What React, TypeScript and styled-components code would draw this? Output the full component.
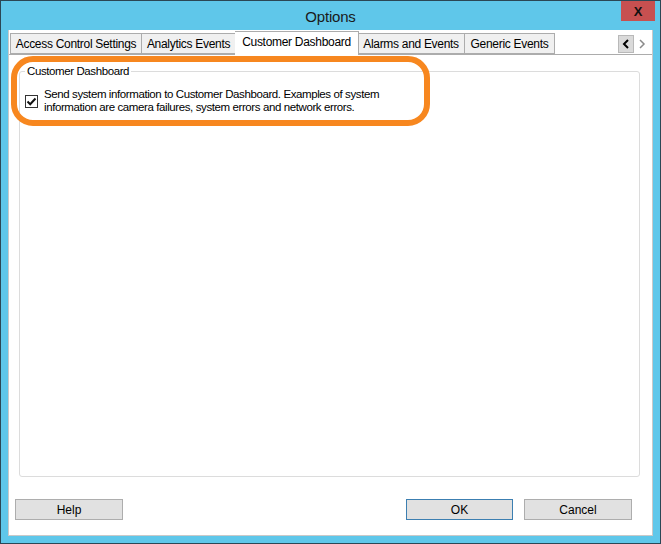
import React from "react";
import styled, { createGlobalStyle } from "styled-components";

const GlobalStyle = createGlobalStyle`
  html, body { margin: 0; padding: 0; background: #ffffff; }
  * { box-sizing: border-box; }
`;

const Window = styled.div`
  position: relative;
  width: 661px;
  height: 544px;
  background: #5fc7ea;
  border: 1px solid #2b4755;
  display: flex;
  flex-direction: column;
  font-family: "Liberation Sans", Arial, sans-serif;
  font-size: 12px;
  color: #000;
`;

const TitleBar = styled.div`
  height: 29px;
  display: grid;
  grid-template-columns: 1fr auto 1fr;
`;

const Title = styled.div`
  grid-column: 2;
  align-self: center;
  font-size: 15px;
  color: #1a1a1a;
  padding-top: 1px;
  letter-spacing: -0.2px;
`;

const CloseButton = styled.div`
  grid-column: 3;
  justify-self: end;
  align-self: start;
  margin-right: 5px;
  width: 34px;
  height: 20px;
  background: #c75050;
  display: flex;
  align-items: center;
  justify-content: center;
  font-weight: bold;
  font-size: 13px;
  color: #111;
`;

const Client = styled.div`
  flex: 1;
  margin: 0 7px 7px 7px;
  background: #ffffff;
  border-left: 1px solid #c9c9c9;
  border-right: 1px solid #c9c9c9;
  border-bottom: 1px solid #c9c9c9;
  display: flex;
  flex-direction: column;
`;

const TabStrip = styled.div`
  display: flex;
  align-items: flex-end;
  height: 24px;
  padding-left: 1px;
  padding-right: 1px;
  background: #ffffff;
`;

const Tab = styled.div<{ $active?: boolean; $w: number }>`
  width: ${(p) => p.$w}px;
  height: ${(p) => (p.$active ? 24 : 21)}px;
  margin-bottom: ${(p) => (p.$active ? -1 : 0)}px;
  position: relative;
  z-index: ${(p) => (p.$active ? 2 : 1)};
  background: ${(p) => (p.$active ? "#ffffff" : "#f0f0f0")};
  border: 1px solid #acacac;
  border-bottom: ${(p) => (p.$active ? "none" : "1px solid #acacac")};
  margin-left: ${(p) => (p.$active ? -1 : 0)}px;
  margin-right: ${(p) => (p.$active ? -1 : 0)}px;
  display: flex;
  align-items: center;
  justify-content: center;
  padding-top: ${(p) => (p.$active ? 0 : 1)}px;
  padding-bottom: ${(p) => (p.$active ? 3 : 0)}px;
  white-space: nowrap;
  font-size: 12px;
  letter-spacing: -0.3px;
  & + & { border-left: ${(p) => (p.$active ? "1px solid #acacac" : "none")}; }
`;

const Spacer = styled.div`
  flex: 1;
`;

const Scroller = styled.div`
  display: flex;
  align-self: flex-end;
  margin-bottom: 1px;
  margin-right: 1px;
`;

const ScrollBtn = styled.div<{ $pressed?: boolean }>`
  width: 16px;
  height: 18px;
  display: flex;
  align-items: center;
  justify-content: center;
  background: ${(p) => (p.$pressed ? "#dadada" : "#ffffff")};
  border: 1px solid ${(p) => (p.$pressed ? "#b9b9b9" : "#ffffff")};
`;

const TabPage = styled.div`
  flex: 1;
  border-top: 1px solid #acacac;
  padding: 10px 12px 0 10px;
  display: flex;
  flex-direction: column;
`;

const Group = styled.fieldset`
  margin: 0;
  height: 412px;
  border: 1px solid #dcdcdc;
  border-radius: 3px;
  padding: 11px 5px 0 5px;
`;

const Legend = styled.legend`
  padding: 0 2px;
  margin-left: 0;
  font-size: 11.5px;
  letter-spacing: -0.4px;
`;

const CheckRow = styled.label`
  display: flex;
  align-items: center;
  gap: 6px;
`;

const CheckBox = styled.span`
  width: 13px;
  height: 13px;
  flex: none;
  border: 1px solid #333;
  background: #fff;
  display: flex;
  align-items: center;
  justify-content: center;
`;

const CheckText = styled.span`
  line-height: 13px;
  font-size: 11.5px;
  letter-spacing: -0.4px;
`;

const ButtonRow = styled.div`
  display: flex;
  align-items: center;
  padding: 0 20px 15px 6px;
  gap: 11px;
`;

const Button = styled.div<{ $default?: boolean; $w: number }>`
  width: ${(p) => p.$w}px;
  height: 21px;
  background: #e1e1e1;
  border: 1px solid ${(p) => (p.$default ? "#3c7fb1" : "#adadad")};
  display: flex;
  align-items: center;
  justify-content: center;
  font-size: 12px;
`;

const Highlight = styled.div`
  position: absolute;
  left: 10px;
  top: 55px;
  width: 419px;
  height: 70px;
  border: 6px solid #f7871f;
  border-radius: 22px;
  pointer-events: none;
  z-index: 5;
`;

const tabs = [
  { label: "Access Control Settings", w: 132 },
  { label: "Analytics Events", w: 94 },
  { label: "Customer Dashboard", w: 124, active: true },
  { label: "Alarms and Events", w: 107 },
  { label: "Generic Events", w: 90 },
];

export default function App() {
  return (
    <>
      <GlobalStyle />
      <Window>
        <TitleBar>
          <Title>Options</Title>
          <CloseButton>X</CloseButton>
        </TitleBar>
        <Client>
          <TabStrip>
            {tabs.map((t) => (
              <Tab key={t.label} $active={t.active} $w={t.w}>
                {t.label}
              </Tab>
            ))}
            <Spacer />
            <Scroller>
              <ScrollBtn $pressed>
                <svg width="8" height="10" viewBox="0 0 8 10">
                  <path d="M6 1 L2 5 L6 9" fill="none" stroke="#000" strokeWidth="2" />
                </svg>
              </ScrollBtn>
              <ScrollBtn>
                <svg width="8" height="10" viewBox="0 0 8 10">
                  <path d="M2 1 L6 5 L2 9" fill="none" stroke="#8a8a8a" strokeWidth="1.5" />
                </svg>
              </ScrollBtn>
            </Scroller>
          </TabStrip>
          <TabPage>
            <Group>
              <Legend>Customer Dashboard</Legend>
              <CheckRow>
                <CheckBox>
                  <svg width="11" height="11" viewBox="0 0 11 11">
                    <path d="M1.5 5.5 L4.2 8.2 L9.5 2.5" fill="none" stroke="#111" strokeWidth="2" />
                  </svg>
                </CheckBox>
                <CheckText>
                  Send system information to Customer Dashboard. Examples of system
                  <br />
                  information are camera failures, system errors and network errors.
                </CheckText>
              </CheckRow>
            </Group>
          </TabPage>
          <ButtonRow>
            <Button $w={108}>Help</Button>
            <Spacer />
            <Button $default $w={107}>OK</Button>
            <Button $w={108}>Cancel</Button>
          </ButtonRow>
        </Client>
        <Highlight />
      </Window>
    </>
  );
}
